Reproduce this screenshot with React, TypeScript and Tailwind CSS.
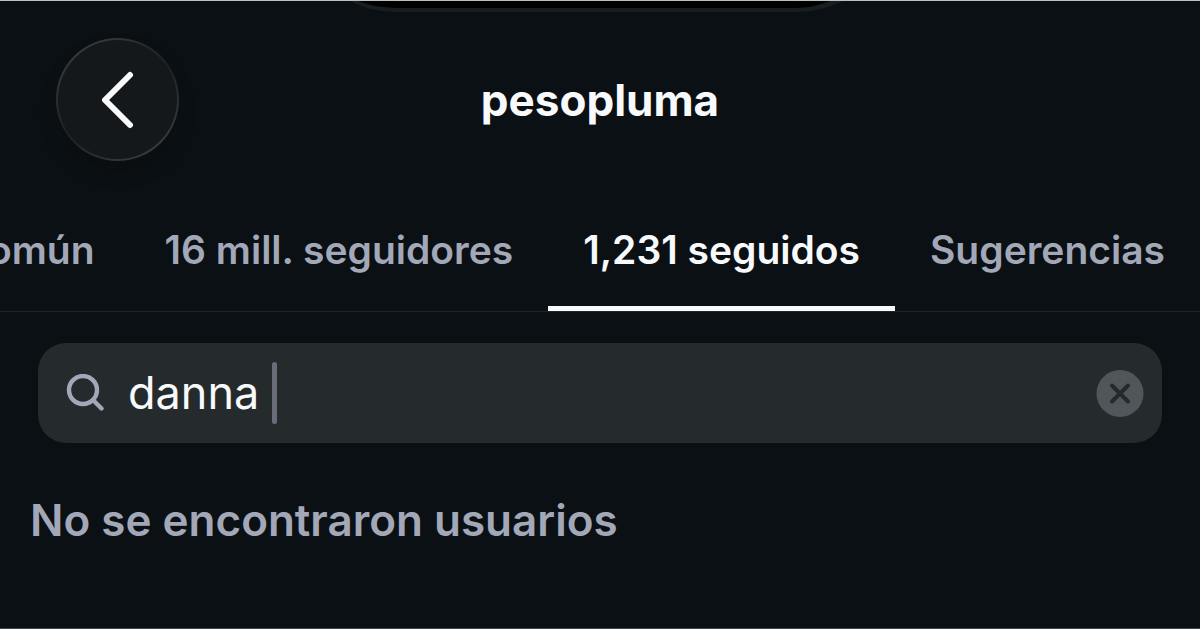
import { useState } from "react"

const tabs = ["en común", "16 mill. seguidores", "1,231 seguidos", "Sugerencias"]

function BackButton() {
  return (
    <button
      type="button"
      aria-label="Atrás"
      className="rounded-full bg-linear-145 from-[#3f444a] via-[#1d2125] to-[#3f444a] p-0.5 shadow-[0_12px_20px_rgba(0,0,0,0.12)]"
    >
      <span className="flex size-[119px] items-center justify-center rounded-full bg-[#14181b]">
        <svg className="h-[58px] w-8" viewBox="0 0 32 58" fill="none" stroke="#f7f9fb" strokeWidth={6} strokeLinecap="round" strokeLinejoin="round">
          <path d="M28 4L3 29l25 25" />
        </svg>
      </span>
    </button>
  )
}

function Tabs({ active, onChange }: { active: string; onChange: (tab: string) => void }) {
  return (
    <div role="tablist" className="flex justify-end overflow-hidden border-b border-[#202529]">
      {tabs.map(tab => (
        <button
          key={tab}
          type="button"
          role="tab"
          aria-selected={tab === active}
          onClick={() => onChange(tab)}
          className={
            tab === active
              ? "shrink-0 whitespace-nowrap border-b-5 border-[#f7f9fb] px-[35px] pt-7 pb-8 text-[39px] leading-12 font-semibold text-[#f7f9fb]"
              : "shrink-0 whitespace-nowrap border-b-5 border-transparent px-[35px] pt-7 pb-8 text-[39px] leading-12 font-semibold text-[#a2a8b7]"
          }
        >
          {tab}
        </button>
      ))}
    </div>
  )
}

function SearchBar({ value, onChange }: { value: string; onChange: (value: string) => void }) {
  return (
    <div className="mx-[38px] mt-[31px] flex h-[100px] items-center rounded-[28px] bg-[#252a2d] pr-[18px] pl-7">
      <label className="flex flex-1 cursor-text items-center">
        <svg className="mr-6 size-[38px] shrink-0" viewBox="0 0 38 38" fill="none" stroke="#a2a8b7" strokeWidth={4.4} strokeLinecap="round">
          <circle cx="17" cy="16" r="14" />
          <path d="M27.5 26.5l8 8" />
        </svg>
        <input
          type="text"
          aria-label="Buscar"
          value={value}
          onChange={e => onChange(e.target.value)}
          className="field-sizing-content bg-transparent text-[45px] leading-14 whitespace-pre text-[#f7f9fb] caret-transparent outline-none"
        />
        <span className="h-[62px] w-[5px] rounded-full bg-[#686d79]" />
      </label>
      <button type="button" aria-label="Borrar" onClick={() => onChange("")}>
        <svg className="size-12" viewBox="0 0 48 48" fill="none">
          <circle cx="24" cy="24.5" r="23.5" fill="#51565a" />
          <path d="M16 16.5l16 16M32 16.5l-16 16" stroke="#252a2d" strokeWidth={4} strokeLinecap="round" />
        </svg>
      </button>
    </div>
  )
}

export default function App() {
  const [active, setActive] = useState("1,231 seguidos")
  const [query, setQuery] = useState("danna ")

  return (
    <main className="relative min-h-screen overflow-hidden border-t border-b border-t-[#b9c2c2] border-b-[#41464a] bg-[#0b1014] font-['Inter',sans-serif]">
      {/* lower edge of the dynamic island */}
      <svg className="absolute top-0 left-1/2 h-3 w-[500px] -translate-x-1/2" viewBox="0 0 500 12">
        <path d="M0 0H493C475 8 464 11 440 11H54C24 11 16 7 0 0Z" fill="#191d20" />
        <path d="M8 0H480C466 5 460 7 440 7H54C32 7 22 5 8 0Z" fill="#000" />
      </svg>

      <header className="grid grid-cols-[1fr_auto_1fr] items-center px-14 pt-[37px]">
        <div className="flex">
          <BackButton />
        </div>
        <h1 className="text-[44px] leading-14 font-bold text-[#f7f9fb]">pesopluma</h1>
      </header>

      <div className="mt-[37px]">
        <Tabs active={active} onChange={setActive} />
      </div>
      <SearchBar value={query} onChange={setQuery} />
      <p className="mt-[49px] px-[30px] text-[44px] leading-14 font-semibold text-[#a2a8b7]">No se encontraron usuarios</p>
    </main>
  )
}
